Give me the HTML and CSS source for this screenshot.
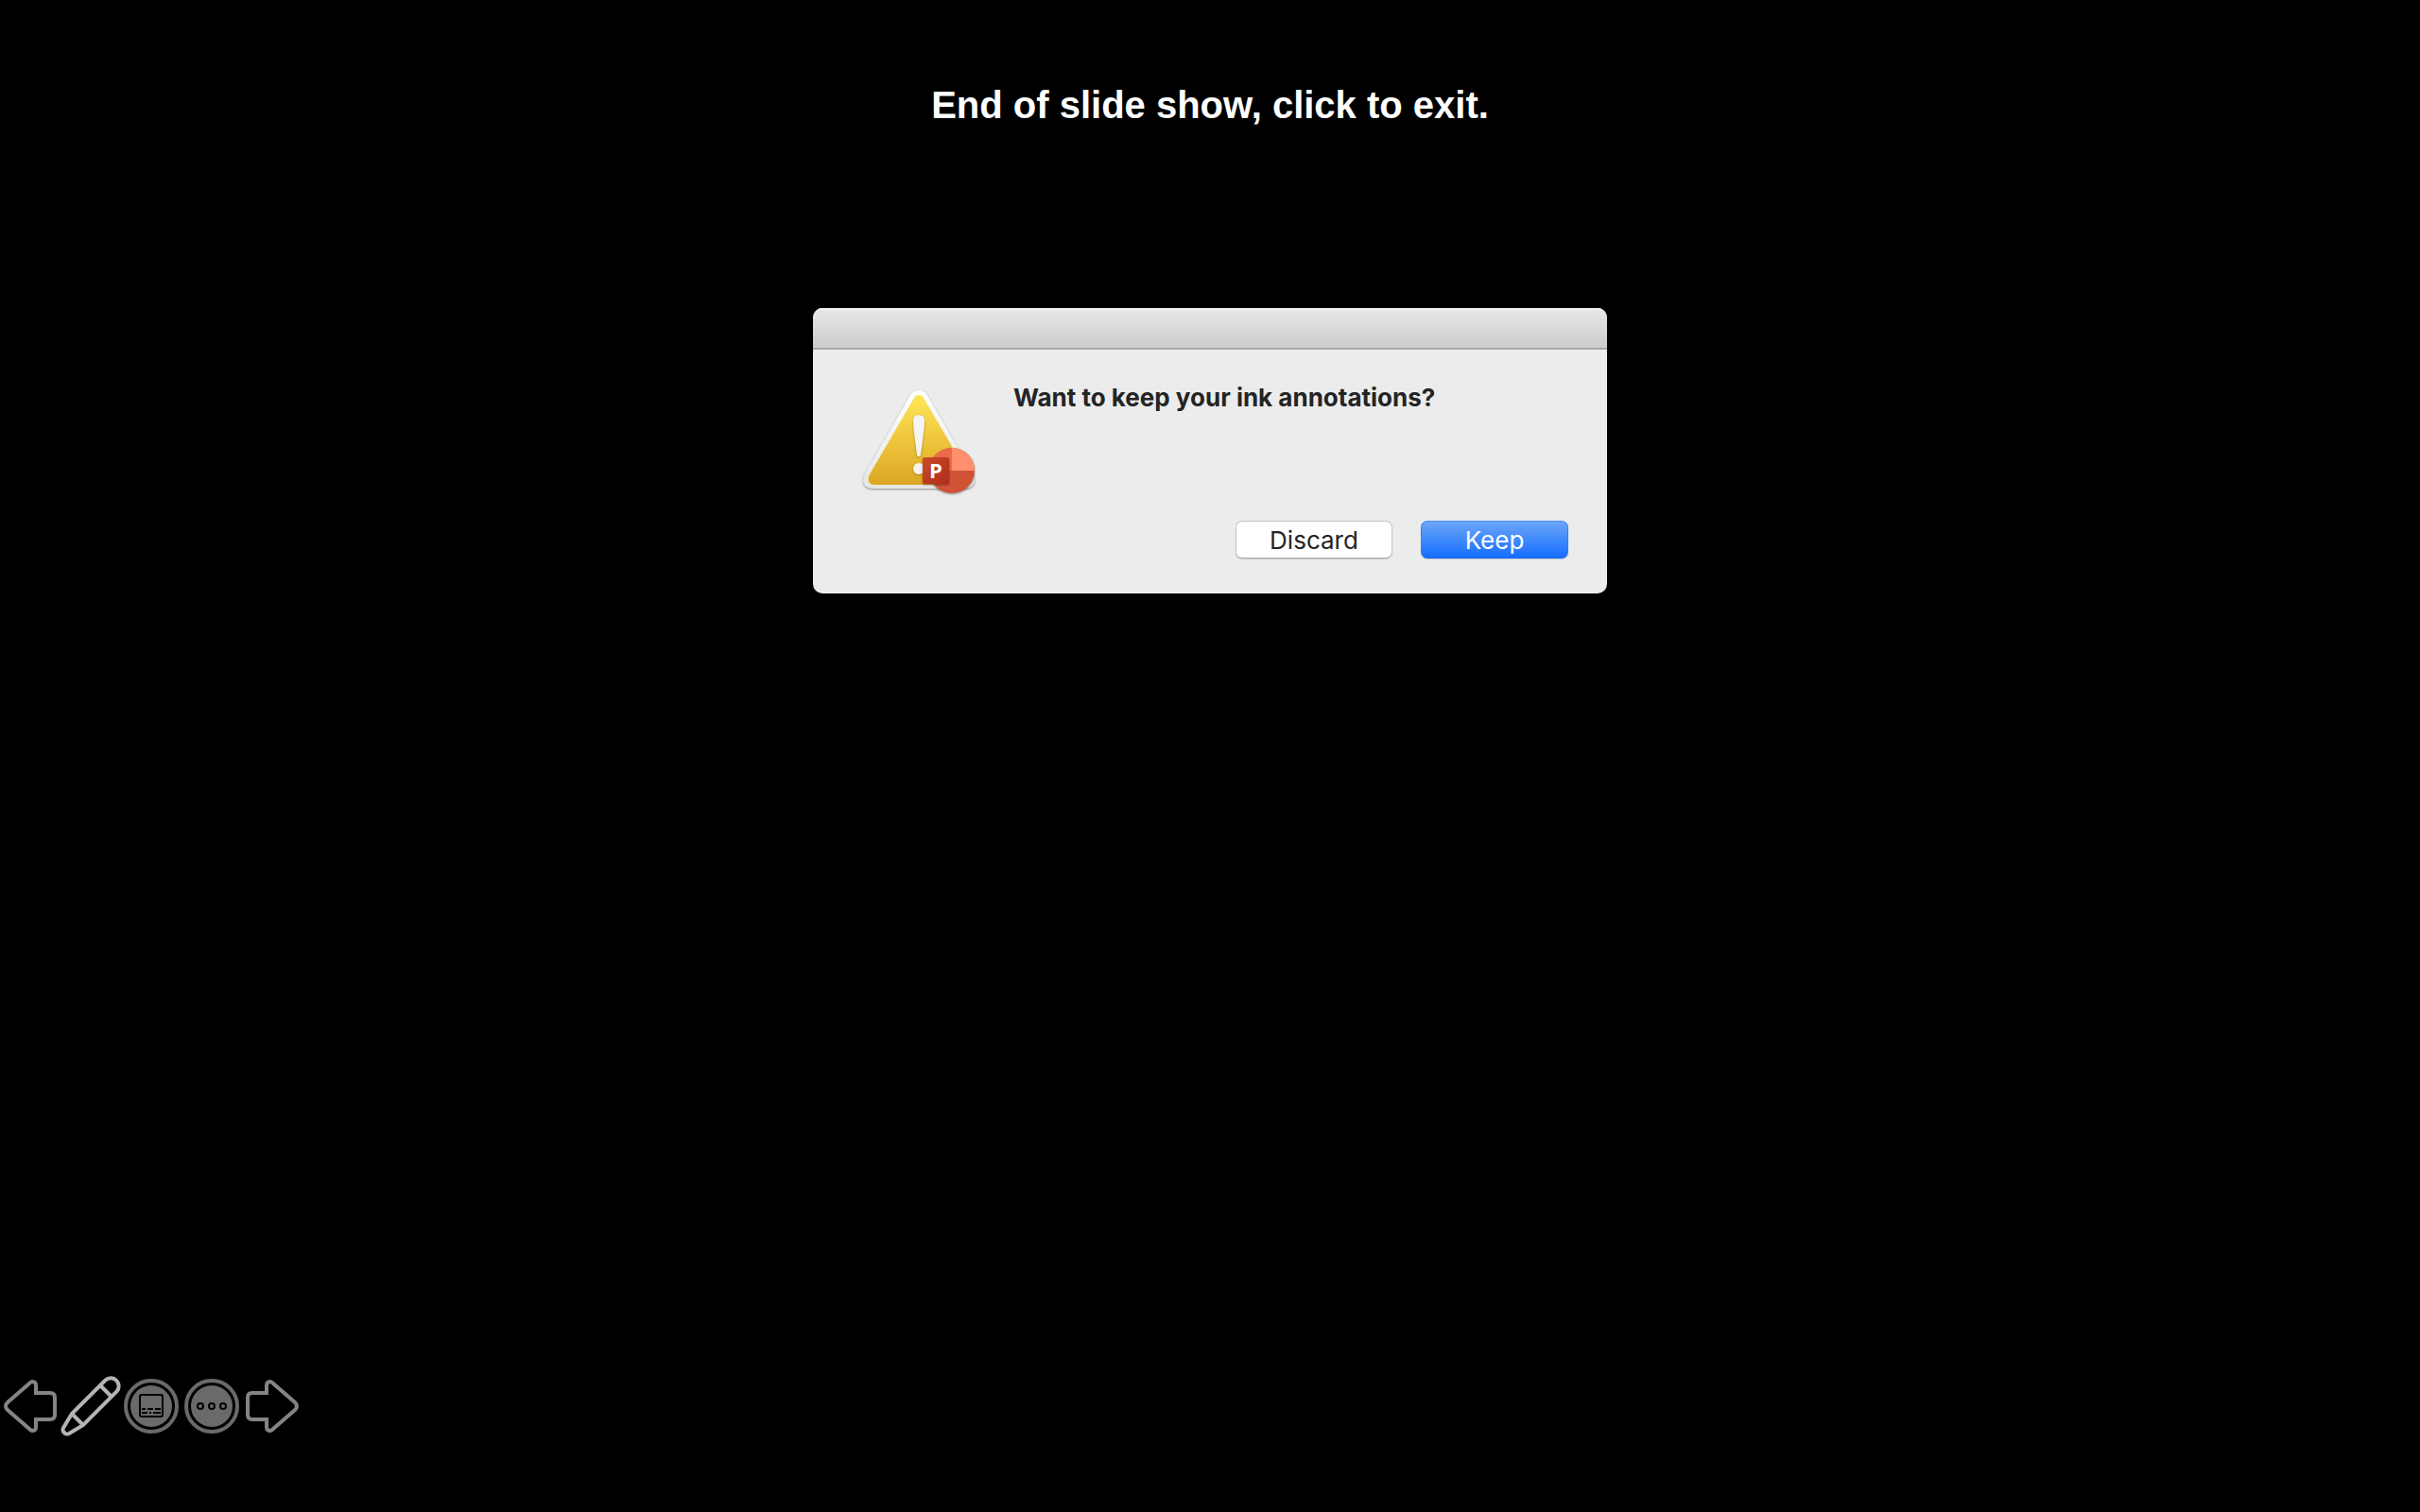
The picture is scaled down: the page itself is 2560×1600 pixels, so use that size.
FILE: index.html
```
<!DOCTYPE html>
<html lang="en">
<head>
    <meta charset="utf-8">
    <title>Slide Show</title>
    <link rel="stylesheet" href="styles.css">
</head>
<body>
    <h1 class="end-message">End of slide show, click to exit.</h1>

    <div class="dialog" role="alertdialog" aria-labelledby="dialog-title">
        <div class="titlebar"></div>
        <div class="dialog-body">
            <svg class="warning" viewBox="0 0 128 128" aria-hidden="true">
                <defs>
                    <linearGradient id="yellow" x1="0" y1="0" x2="0" y2="1">
                        <stop offset="0" stop-color="#ffe657"/>
                        <stop offset="1" stop-color="#dda623"/>
                    </linearGradient>
                    <linearGradient id="edge" x1="0" y1="0" x2="0" y2="1">
                        <stop offset="0" stop-color="#ffffff"/>
                        <stop offset="1" stop-color="#e6e6e2"/>
                    </linearGradient>
                    <linearGradient id="red" x1="0" y1="0" x2="1" y2="1">
                        <stop offset="0" stop-color="#ca4c28"/>
                        <stop offset="1" stop-color="#b02c1a"/>
                    </linearGradient>
                </defs>
                <path class="shadow" fill="url(#edge)" d="M55 14Q59 9 64 9T73 14L121 97Q125 105 121 110Q118 113 112 113H16Q10 113 7 110Q3 105 7 97Z"/>
                <path fill="url(#yellow)" d="M59 17Q61 14 64 14T69 17L117 99Q120 105 117 107Q115 109 112 109H17Q14 109 12 107Q9 104 12 98Z"/>
                <path class="mark" d="M58 41Q58 35 64 35T70 41Q70 49 66 77Q66 79 64 79T62 77Q58 49 58 41Z"/>
                <circle class="mark" cx="64" cy="92" r="6"/>
                <g class="shadow">
                    <circle cx="99" cy="94" r="24" fill="#d15336"/>
                    <path d="M99 94V70A24 24 0 0 0 75 94Z" fill="#ec6c4c"/>
                    <path d="M99 94V70A24 24 0 0 1 123 94Z" fill="#ff8f6d"/>
                </g>
                <rect class="shadow" x="68" y="80" width="28" height="28" rx="2" fill="url(#red)"/>
                <text class="badge-letter" x="82" y="102">P</text>
            </svg>
            <h2 class="dialog-title" id="dialog-title">Want to keep your ink annotations?</h2>
        </div>
        <div class="dialog-buttons">
            <button class="button" type="button">Discard</button>
            <button class="button button-default" type="button">Keep</button>
        </div>
    </div>

    <div class="toolbar">
        <button class="tool" type="button" aria-label="Previous">
            <svg class="arrow" viewBox="0 0 64 64"><path d="M38 18V10Q38 6 34 6Q33 6 31 8L8 28Q4 32 8 36L31 56Q33 58 34 58Q38 58 38 54V46H53Q58 46 58 41V23Q58 18 53 18Z"/></svg>
        </button>
        <button class="tool" type="button" aria-label="Pen">
            <svg class="pen" viewBox="0 0 64 64"><path d="M12 40L47.500 4.500A8.500 8.500 0 0 1 59.500 16.500L24 52L9 61Q7 62 5 61L3 59Q2 57 3 55Z"/><path d="M42 10L54 22M12 40L24 52"/></svg>
        </button>
        <button class="tool" type="button" aria-label="Subtitles">
            <svg class="round" viewBox="0 0 64 64">
                <circle class="ring" cx="32" cy="32" r="27"/>
                <circle class="disc" cx="32" cy="32" r="22"/>
                <rect class="line" x="20" y="20" width="24" height="23" rx="2"/>
                <path class="line" d="M22 35H26M28 35H34M36 35H42M22 39H28M30 39H32M34 39H42"/>
            </svg>
        </button>
        <button class="tool" type="button" aria-label="More options">
            <svg class="round" viewBox="0 0 64 64">
                <circle class="ring" cx="32" cy="32" r="27"/>
                <circle class="disc" cx="32" cy="32" r="22"/>
                <circle class="line" cx="20" cy="32" r="3"/>
                <circle class="line" cx="32" cy="32" r="3"/>
                <circle class="line" cx="44" cy="32" r="3"/>
            </svg>
        </button>
        <button class="tool" type="button" aria-label="Next">
            <svg class="arrow" viewBox="0 0 64 64"><path d="M26 18V10Q26 6 30 6Q31 6 33 8L56 28Q60 32 56 36L33 56Q31 58 30 58Q26 58 26 54V46H11Q6 46 6 41V23Q6 18 11 18Z"/></svg>
        </button>
    </div>
</body>
</html>
```
FILE: styles.css
```
body {
    margin: 0;
    min-height: 100vh;
    box-sizing: border-box;
    padding: 87px 0 80px;
    display: flex;
    flex-direction: column;
    align-items: center;
    background-color: #000;
    font-family: Inter, sans-serif;
}
.end-message {
    margin: 0 0 191px;
    font-family: "Liberation Sans", Arial, sans-serif;
    font-size: 40px;
    line-height: 48px;
    color: #fff;
}
.dialog {
    width: 840px;
    max-width: 100%;
    border-radius: 10px;
    overflow: hidden;
    background-color: #ececec;
    color: #242424;
}
.titlebar {
    height: 42px;
    border-bottom: 2px solid #a8a8a8;
    background-image: linear-gradient(#e8e8e8, #cccccc);
    box-shadow: inset 0 2px 0 #f4f4f4;
}
.dialog-body {
    display: flex;
    align-items: flex-start;
    gap: 36px;
    padding: 34px 40px 0 48px;
}
.warning {
    width: 128px;
    height: 128px;
    flex: none;
}
.shadow {
    filter: drop-shadow(0 1px 1px rgba(0, 0, 0, 0.4));
}
.mark {
    fill: #f4f4f4;
    filter: drop-shadow(0 1px 1px rgba(110, 70, 0, 0.5));
}
.badge-letter {
    font-family: "Open Sans", sans-serif;
    font-size: 22px;
    font-weight: bold;
    text-anchor: middle;
    fill: #fff;
}
.dialog-title {
    margin: 0;
    font-size: 26px;
    line-height: 34px;
}
.dialog-buttons {
    display: flex;
    justify-content: flex-end;
    gap: 30px;
    padding: 19px 41px 37px;
}
.button {
    min-width: 166px;
    height: 40px;
    padding: 2px 0 0;
    border: 1px solid #c4c4c4;
    border-bottom-color: #acacac;
    border-radius: 7px;
    background-color: #fff;
    box-shadow: 0 1px 1px rgba(0, 0, 0, 0.15);
    color: #242424;
    font-family: inherit;
    font-size: 26px;
    line-height: 36px;
}
.button-default {
    min-width: 156px;
    border-color: #4a8df5 #2f7df8 #1268f5;
    background-image: linear-gradient(#6ca6f9, #156dff);
    color: #fff;
}
.toolbar {
    display: flex;
    align-self: flex-start;
    margin-top: auto;
}
.tool {
    width: 64px;
    height: 64px;
    padding: 0;
    border: none;
    background: none;
}
.tool svg {
    display: block;
    fill: none;
    stroke-width: 4px;
}
.arrow {
    stroke: #848484;
}
.pen {
    stroke: #b4b4b4;
}
.ring {
    stroke: #6a6a6a;
}
.disc {
    fill: #6a6a6a;
}
.line {
    stroke: #000;
    stroke-width: 2px;
}
```
